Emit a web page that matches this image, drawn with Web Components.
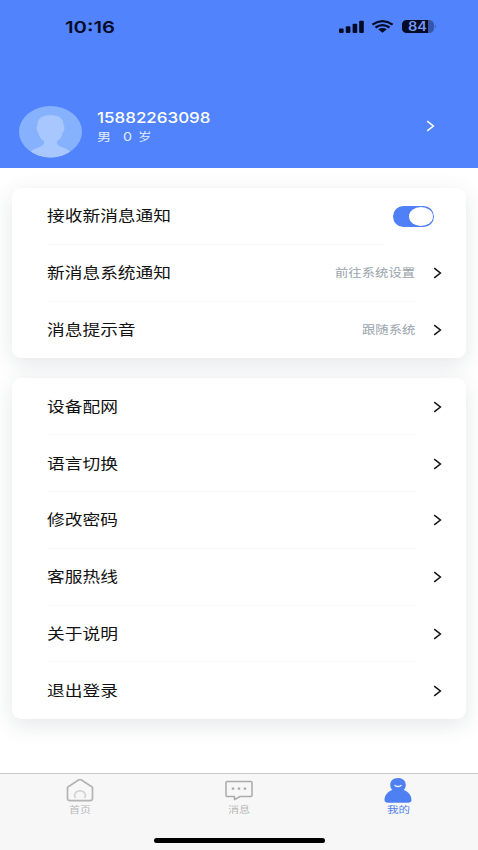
<!DOCTYPE html>
<html lang="zh-CN">
<head>
<meta charset="utf-8">
<title>我的</title>
<style>
html,body{margin:0;padding:0}
body{width:478px;height:850px;overflow:hidden;background:#fff;font-family:Inter,"Noto Sans CJK SC",sans-serif}
</style>
</head>
<body>
<profile-page></profile-page>
<script>
const define = (name, html, setup) => customElements.define(name, class extends HTMLElement {
  connectedCallback() {
    if (this.shadowRoot) return;
    const t = document.createElement('template');
    t.innerHTML = html;
    this.attachShadow({ mode: 'open' }).append(t.content.cloneNode(true));
    if (setup) setup(this, this.shadowRoot);
  }
});

/* A line of text widened horizontally to the width given in "w". */
define('wide-text', `
<style>
:host{display:block;white-space:nowrap;line-height:20px;height:20px}
span{display:inline-block;vertical-align:top;transform-origin:0 50%}
</style><span><slot></slot></span>`, (el, root) => {
  const s = root.querySelector('span'), w = +el.getAttribute('w');
  el.style.width = w + 'px';
  s.style.transform = `scaleX(${w / s.getBoundingClientRect().width})`;
});

define('chevron-icon', `
<style>:host{display:block;width:9px;height:12px}svg{display:block}</style>
<svg width="9" height="12" viewBox="0 0 9 12" fill="none" stroke="currentColor" stroke-width="1.5"><path d="M1.2 1.1 7.4 6 1.2 10.9"/></svg>`);

define('toggle-switch', `
<style>
:host{display:block;box-sizing:border-box;width:41px;height:21px;border-radius:11px;background:#4f80f8;padding:1px}
i{display:block;width:24px;height:19px;margin-left:auto;border-radius:12px/9.5px;background:#fff}
</style><i></i>`);

define('status-bar', `
<style>
:host{display:flex;align-items:center;justify-content:space-between;height:53px;padding:0 42px 0 65px;color:#050a25}
wide-text{font-size:16.500px;font-weight:600}
svg{display:block}
text{font:600 12.5px Inter,sans-serif}
</style>
<wide-text w="50">10:16</wide-text>
<svg width="97" height="16" viewBox="0 0 97 16">
  <g fill="#050a25">
    <rect y="9.5" width="4.6" height="4.5" rx="1"/><rect x="6.8" y="7.2" width="4.6" height="6.8" rx="1"/>
    <rect x="13.6" y="4.7" width="4.6" height="9.3" rx="1"/><rect x="20.2" y="1.8" width="4.6" height="12.2" rx="1"/>
    <path d="M39.2 10.3Q43.5 7.8 47.8 10.3L43.5 13.8Z"/>
  </g>
  <path d="M33.4 5.6Q43.5-1.2 53.6 5.6M36.5 8.5Q43.5 3.7 50.5 8.5" fill="none" stroke="#050a25" stroke-width="2.3"/>
  <path d="M68 1h22a5 4.5 0 0 1 5 4.500v4a5 4.500 0 0 1-5 4.500H68a5 4.500 0 0 1-5-4.500v-4A5 4.500 0 0 1 68 1Z" fill="#3556ab"/>
  <path d="M68 1h21v13H68a5 4.500 0 0 1-5-4.500v-4A5 4.500 0 0 1 68 1Z" fill="#050a25"/>
  <path d="M95.900 5.800q1.800 1.700 0 3.400Z" fill="#3556ab"/>
  <text x="69" y="12" textLength="19" lengthAdjust="spacingAndGlyphs" fill="#7599f5">84</text>
</svg>`);

define('user-avatar', `
<style>:host{display:block;width:63px;height:52px}svg{display:block}</style>
<svg width="63" height="52" viewBox="0 0 63 52">
  <clipPath id="c"><ellipse cx="31.500" cy="25.700" rx="31.500" ry="25.700"/></clipPath>
  <g clip-path="url(#c)"><path fill="#86b1fd" d="M0 0h63v52H0z"/>
  <path fill="#a7c7fe" d="M31.500 9c8.500 0 13 3.700 13 9.500v1c1.500.5 1.200 5.500-.8 7-.6 4.500-3 7-5.700 8.500v2c0 4 8 3.500 14.500 9.500V54h-42v-7.500C17 40.500 25 41 25 37v-2c-2.700-1.500-5.100-4-5.700-8.500-2-1.500-2.300-6.500-.8-7v-1C18.500 12.700 23 9 31.500 9Z"/></g>
</svg>`);

define('profile-header', `
<style>
:host{display:flow-root;height:167.500px;background:#5183fd;color:#fff}
.p{display:flex;align-items:center;margin-top:52.500px;padding:0 43px 0 19px;height:52px}
.info{margin:0 auto 0 15px;padding-bottom:9px}
.n{font-size:15px;font-weight:500}
.d{display:flex;font-size:11.500px;color:#e2ecff;margin-top:-1px}
.z{margin:0 5.500px 0 12px;font-size:12px}
chevron-icon{margin-top:-12px}
</style>
<status-bar></status-bar>
<div class="p"><user-avatar></user-avatar>
<div class="info"><wide-text class="n" w="113.500">15882263098</wide-text>
<div class="d"><wide-text w="14">男</wide-text><wide-text class="z" w="9">0</wide-text><wide-text w="13.500">岁</wide-text></div></div>
<chevron-icon></chevron-icon></div>`);

define('setting-card', `
<style>:host{display:block;margin:0 12px;border-radius:9px;background:#fff;box-shadow:0 6px 22px rgba(50,65,80,.13)}</style><slot></slot>`);

define('setting-row', `
<style>
:host{display:flex;align-items:center;height:56.800px;padding:0 24.500px 0 35px;color:#111}
.m{flex:1;display:flex;align-items:center;justify-content:space-between;box-sizing:border-box;height:100%;padding-top:1px;border-bottom:1px solid #f7f8f8;margin-right:17px}
:host([last]) .m{border-color:transparent}
:host([toggle]){padding-right:32px}
:host([toggle]) .m{margin-right:10px}
.label{font-size:14.800px}
.value{font-size:11.200px;color:#98a3ab}
</style><div class="m"></div>`, (el, root) => {
  const m = root.querySelector('.m');
  const add = (cls, text, advance) => {
    const t = document.createElement('wide-text');
    t.className = cls;
    t.textContent = text;
    t.setAttribute('w', text.length * advance);
    m.append(t);
  };
  add('label', el.getAttribute('label'), 17.720);
  if (el.getAttribute('value')) add('value', el.getAttribute('value'), 13.350);
  root.append(document.createElement(el.hasAttribute('toggle') ? 'toggle-switch' : 'chevron-icon'));
});

define('tab-item', `
<style>
:host{display:flex;flex:1;flex-direction:column;align-items:center;padding-top:4px;color:#b7b7b7;font-size:8.700px}
:host([active]){color:#4f7fef}
.t{margin-top:-4.500px}
</style><slot></slot><div class="t"></div>`, (el, root) => {
  const t = document.createElement('wide-text');
  t.textContent = el.getAttribute('label');
  t.setAttribute('w', el.getAttribute('w'));
  root.querySelector('.t').append(t);
});

define('tab-bar', `
<style>
:host{display:flex;flex-direction:column;box-sizing:border-box;height:77px;background:#f7f7f7;border-top:1px solid #c9c9c9}
nav{display:flex;height:64px}
svg{display:block}
.home{width:171px;height:5px;border-radius:3px;background:#000;margin:0 auto}
</style>
<nav>
<tab-item label="首页" w="22"><svg width="30" height="26" viewBox="0 0 30 26" fill="none" stroke="#b4b4b4" stroke-width="1.700" stroke-linejoin="round"><path d="M2.500 9.300 13.500 2Q15 1.200 16.500 2L27.500 9.300V20.500Q27.500 22.700 25 22.700H5Q2.500 22.700 2.500 20.500Z"/><path stroke="#d5d5d5" d="M10.500 20Q9 17.500 10 15.500Q11.500 12.800 15 12.800T20 15.500Q21 17.500 19.500 20"/></svg></tab-item>
<tab-item label="消息" w="22"><svg width="30" height="26" viewBox="0 0 30 26" fill="none" stroke="#aaa" stroke-width="1.500" stroke-linejoin="round"><path d="M3 3.500H27Q28 3.500 28 4.500V17.500Q28 18.500 27 18.500H16L10.500 21.700V18.500H3Q2 18.500 2 17.500V4.500Q2 3.500 3 3.500Z"/><path stroke-width="2.300" d="M7.800 10.700h2.400M13.800 10.700h2.400M19.800 10.700h2.400"/></svg></tab-item>
<tab-item active label="我的" w="23"><svg width="30" height="26" viewBox="0 0 30 26"><path fill="#4f80f3" d="M15 0C20 0 22.800 3 22.800 7Q22.800 10 20.800 12C26 14 28.500 18 28.500 22Q28.500 24.700 25 24.700H5Q1.500 24.700 1.500 22C1.500 18 4 14 9.200 12Q7.200 10 7.200 7C7.200 3 10 0 15 0Z"/><path fill="none" stroke="#e9f1ff" stroke-width="1.500" stroke-linecap="round" d="M12 7.500Q15 9.700 18 7.500"/></svg></tab-item>
</nav>
<div class="home"></div>`);

define('profile-page', `
<style>
:host{display:flex;flex-direction:column;height:850px;background:#fff}
main{display:flex;flex-direction:column;gap:20px;padding-top:20.500px;flex:1;min-height:0}
tab-bar{flex:none}
</style>
<profile-header></profile-header>
<main>
<setting-card>
<setting-row label="接收新消息通知" toggle></setting-row>
<setting-row label="新消息系统通知" value="前往系统设置"></setting-row>
<setting-row label="消息提示音" value="跟随系统" last></setting-row>
</setting-card>
<setting-card>
<setting-row label="设备配网"></setting-row>
<setting-row label="语言切换"></setting-row>
<setting-row label="修改密码"></setting-row>
<setting-row label="客服热线"></setting-row>
<setting-row label="关于说明"></setting-row>
<setting-row label="退出登录" last></setting-row>
</setting-card>
</main>
<tab-bar></tab-bar>`);
</script>
</body>
</html>
